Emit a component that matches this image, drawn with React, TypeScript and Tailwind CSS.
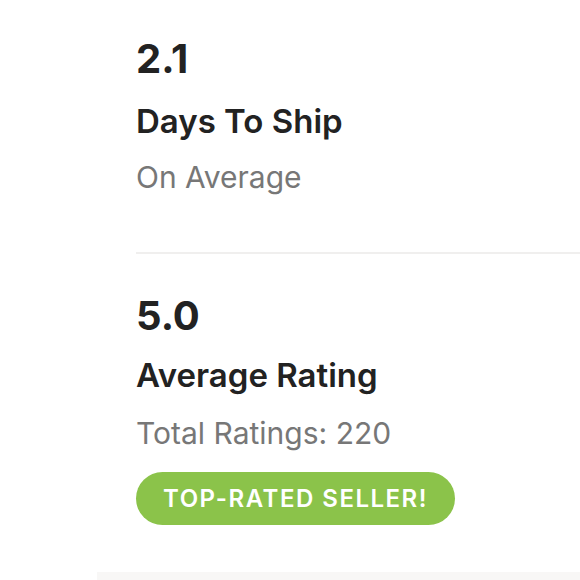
export default function App() {
  return (
    <div className="w-[580px] h-[580px] bg-white overflow-hidden relative" style={{ fontFamily: 'Inter, "Open Sans", sans-serif' }}>
      <div className="pl-[136px] pt-[39px]">
        <div className="text-[40px] font-bold leading-none text-[#222]">2.1</div>
        <div className="mt-[26px] text-[33px] font-semibold leading-none text-[#222]">Days To Ship</div>
        <div className="mt-[24px] text-[30px] leading-none text-[#777]">On Average</div>
        <div className="mt-[60px] h-[2px] bg-[#f0efee]" />
        <div className="mt-[42px] text-[40px] font-bold leading-none text-[#222]">5.0</div>
        <div className="mt-[23px] text-[33px] font-semibold leading-none text-[#222]">Average Rating</div>
        <div className="mt-[26px] text-[30px] leading-none text-[#777]">Total Ratings: 220</div>
        <div className="mt-[24px] w-[319px] h-[53px] rounded-full bg-[#8bc34a] flex items-center justify-center text-white text-[24px] font-semibold leading-none tracking-[1.5px]">TOP-RATED SELLER!</div>
      </div>
      <div className="absolute left-[97px] right-0 top-[572px] bottom-0 bg-[#f8f7f6]" />
    </div>
  );
}
